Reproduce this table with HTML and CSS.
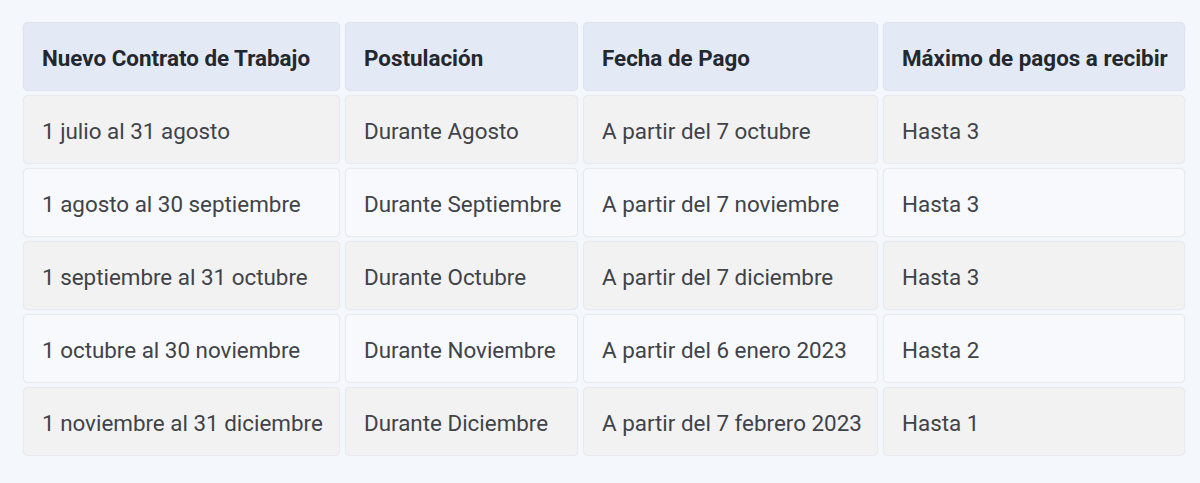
FILE: index.html
```html
<!DOCTYPE html>
<html lang="es">
<head>
<meta charset="utf-8">
<title>Tabla de pagos</title>
<link rel="stylesheet" href="styles.css">
</head>
<body>
<div class="wrap">
  <div class="grid" role="table">
    <div class="cell head">Nuevo Contrato de Trabajo</div>
    <div class="cell head">Postulación</div>
    <div class="cell head">Fecha de Pago</div>
    <div class="cell head">Máximo de pagos a recibir</div>

    <div class="cell odd">1 julio al 31 agosto</div>
    <div class="cell odd">Durante Agosto</div>
    <div class="cell odd">A partir del 7 octubre</div>
    <div class="cell odd">Hasta 3</div>

    <div class="cell even">1 agosto al 30 septiembre</div>
    <div class="cell even">Durante Septiembre</div>
    <div class="cell even">A partir del 7 noviembre</div>
    <div class="cell even">Hasta 3</div>

    <div class="cell odd">1 septiembre al 31 octubre</div>
    <div class="cell odd">Durante Octubre</div>
    <div class="cell odd">A partir del 7 diciembre</div>
    <div class="cell odd">Hasta 3</div>

    <div class="cell even">1 octubre al 30 noviembre</div>
    <div class="cell even">Durante Noviembre</div>
    <div class="cell even">A partir del 6 enero 2023</div>
    <div class="cell even">Hasta 2</div>

    <div class="cell odd">1 noviembre al 31 diciembre</div>
    <div class="cell odd">Durante Diciembre</div>
    <div class="cell odd">A partir del 7 febrero 2023</div>
    <div class="cell odd">Hasta 1</div>
  </div>
</div>
</body>
</html>
```
FILE: styles.css
```css
html, body {
  margin: 0;
  padding: 0;
  background: #f4f7fb;
}
body {
  font-family: Roboto, "Liberation Sans", Arial, sans-serif;
  -webkit-font-smoothing: antialiased;
}
.wrap {
  padding: 22px 0 0 23px;
}
.grid {
  display: grid;
  grid-template-columns: 317px 233px 295px 302px;
  grid-auto-rows: 69px;
  gap: 4px 5px;
}
.cell {
  box-sizing: border-box;
  display: flex;
  align-items: center;
  padding: 2px 0 0 18px;
  border: 1px solid #e7eaef;
  border-radius: 5px;
  font-size: 22.4px;
  color: #404349;
  white-space: nowrap;
  box-shadow: 0 0 1px rgba(200, 206, 216, 0.4);
}
.head {
  background: #e4eaf5;
  border-color: #dde4ef;
  font-weight: 700;
  color: #23272e;
}
.odd {
  background: #f2f2f2;
}
.even {
  background: #f7f9fd;
}
```
